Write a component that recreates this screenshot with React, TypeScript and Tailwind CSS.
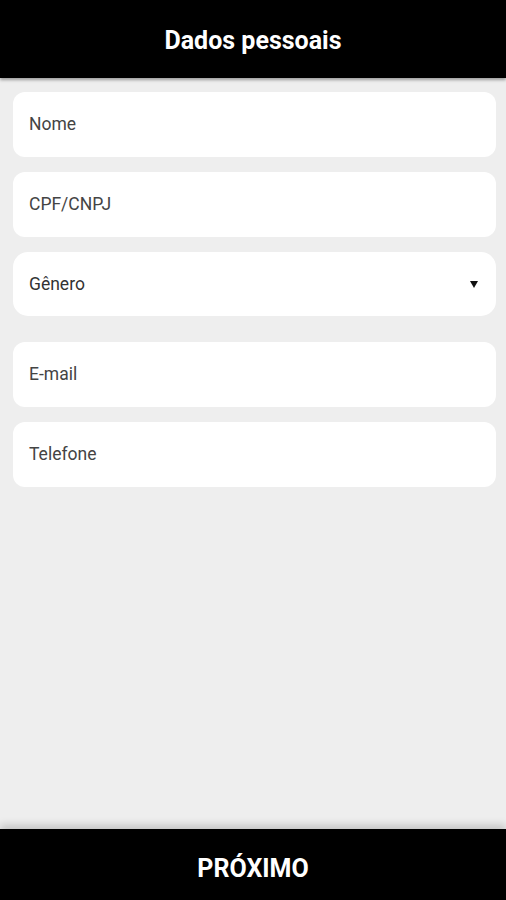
import React from 'react';

const fields = [
  { label: 'Nome', select: false },
  { label: 'CPF/CNPJ', select: false },
  { label: 'Gênero', select: true },
  { label: 'E-mail', select: false },
  { label: 'Telefone', select: false },
];

export default function App() {
  return (
    <div className="h-[900px] w-full flex flex-col bg-[#eeeeee] font-['Roboto',sans-serif]">
      {/* Top bar */}
      <header className="h-[78px] shrink-0 bg-black flex items-center justify-center pt-[2px] shadow-[0_2px_3px_rgba(0,0,0,0.35)]">
        <h1 className="text-white font-bold text-[25px] leading-none">Dados pessoais</h1>
      </header>

      {/* Form */}
      <main className="flex-1 flex flex-col pl-[13px] pr-[10px] pt-[14px]">
        {fields.map((f) =>
          f.select ? (
            <div
              key={f.label}
              className="h-[64px] mb-[26px] bg-white rounded-[15px] flex items-center justify-between pl-[16px] pr-[18px]"
            >
              <span className="text-[17.5px] text-[#333333]">{f.label}</span>
              <svg width="8" height="7" viewBox="0 0 8 7">
                <path d="M0 0 H8 L4 7 Z" fill="#111111" />
              </svg>
            </div>
          ) : (
            <div
              key={f.label}
              className="h-[65px] mb-[15px] bg-white rounded-[12px] flex items-center pl-[16px]"
            >
              <span className="text-[17.5px] text-[#444444]">{f.label}</span>
            </div>
          )
        )}
      </main>

      {/* Bottom button */}
      <footer className="h-[71px] shrink-0 bg-black flex items-center justify-center pt-[7px] shadow-[0_-4px_8px_rgba(0,0,0,0.18)]">
        <span className="text-white font-bold text-[25px] leading-none">PRÓXIMO</span>
      </footer>
    </div>
  );
}
